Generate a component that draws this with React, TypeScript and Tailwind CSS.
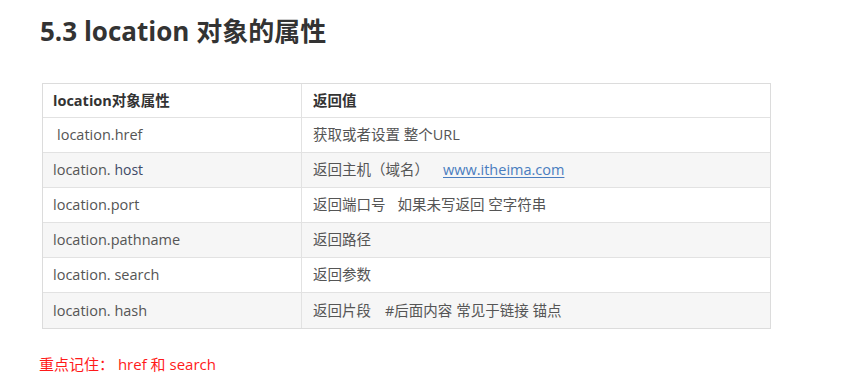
import React from "react";

const font = { fontFamily: '"Open Sans", "Noto Sans CJK SC", sans-serif' };

type Row = { k: React.ReactNode; v: React.ReactNode; gray?: boolean };

export default function App() {
  const rows: Row[] = [
    { k: <span className="ml-[4px]">location.href</span>, v: <span>获取或者设置 整个URL</span> },
    {
      k: (
        <span>
          location. <span className="text-[#3e4a66] text-[14px]">host</span>
        </span>
      ),
      v: (
        <span>
          返回主机（域名）
          <span className="ml-[14px] text-[#4a7dbf] underline underline-offset-2">www.itheima.com</span>
        </span>
      ),
      gray: true,
    },
    {
      k: <span>location.port</span>,
      v: (
        <span>
          返回端口号<span className="ml-[12px]">如果未写返回 空字符串</span>
        </span>
      ),
    },
    { k: <span>location.pathname</span>, v: <span>返回路径</span>, gray: true },
    { k: <span>location. search</span>, v: <span>返回参数</span> },
    {
      k: <span>location. hash</span>,
      v: (
        <span>
          返回片段<span className="ml-[14px]">#后面内容 常见于链接 锚点</span>
        </span>
      ),
      gray: true,
    },
  ];

  return (
    <div className="w-full h-[391px] bg-white overflow-hidden" style={font}>
      <div className="pt-[18px] pl-[40px]">
        <h1 className="text-[26px] leading-[26px] font-bold text-[#333333]">5.3 location 对象的属性</h1>
      </div>
      <div className="mt-[39px] ml-[42px] w-[729px] border border-[#dcdcdc] text-[14.5px] text-[#555555]">
        <div className="grid grid-cols-[259px_1fr] h-[34px] border-b border-[#e2e2e2] bg-white font-bold text-[#333333]">
          <div className="flex items-center pl-[10px] border-r border-[#e2e2e2]">location对象属性</div>
          <div className="flex items-center pl-[11px]">返回值</div>
        </div>
        {rows.map((r, i) => (
          <div
            key={i}
            className={`grid grid-cols-[259px_1fr] h-[35px] ${i < rows.length - 1 ? "border-b" : ""} border-[#e2e2e2] ${
              r.gray ? "bg-[#f6f6f6]" : "bg-white"
            }`}
          >
            <div className="flex items-center pl-[10px] border-r border-[#e2e2e2]">{r.k}</div>
            <div className="flex items-center pl-[11px]">{r.v}</div>
          </div>
        ))}
      </div>
      <div className="mt-[25px] ml-[39px] text-[15px] leading-[20px] text-[#ff1a1a]">重点记住： href 和 search</div>
    </div>
  );
}
